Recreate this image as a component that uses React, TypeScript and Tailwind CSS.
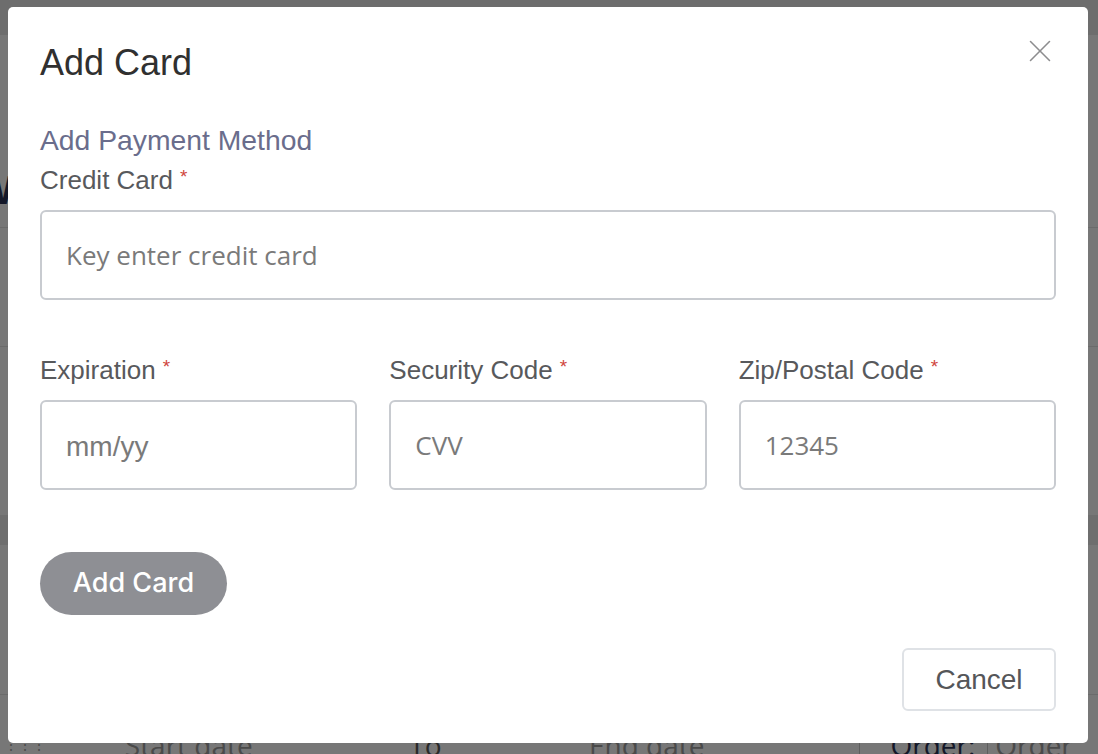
import { X } from "lucide-react";

function Label({ text }: { text: string }) {
    return (
        <div className="flex h-[26px] items-start text-[26px] leading-[26px] text-[#58595c]">
            <span>{text}</span>
            <span className="ml-[7px] text-[19px] leading-[19px] text-[#d0453c]">*</span>
        </div>
    );
}

function Field({ placeholder, mono }: { placeholder: string; mono?: boolean }) {
    return (
        <input
            placeholder={placeholder}
            className={`h-[90px] w-full rounded-[6px] border-2 border-[#c8cbd0] bg-white pl-[24px] text-[#444] outline-none placeholder:text-[#7a7a7a] ${mono ? "pt-[4px] font-['Liberation_Sans',Arial,sans-serif] text-[28px]" : "font-['Open_Sans',sans-serif] text-[26px]"}`}
        />
    );
}

export default function App() {
    return (
        <div className="relative h-[754px] w-full overflow-hidden bg-[#777777] font-['Liberation_Sans',Arial,sans-serif]">
            {/* page behind the overlay */}
            <div className="flex h-full flex-col">
                <div className="h-[35px] shrink-0 bg-[#6d6d6d]" />
                <div className="h-[140px] shrink-0" />
                <div className="h-[53px] shrink-0 border-b border-[#6b6b6b]">
                    <span className="-ml-[24px] block text-[40px] font-bold leading-[30px] text-[#141829]">W</span>
                </div>
                <div className="h-[119px] shrink-0 border-b border-[#6b6b6b]" />
                <div className="h-[168px] shrink-0" />
                <div className="h-[30px] shrink-0 bg-[#6e6e6e]" />
                <div className="h-[150px] shrink-0 border-b border-[#6b6b6b]" />
                <div className="h-[36px] shrink-0" />
                <div className="flex h-[40px] shrink-0 items-start font-['Open_Sans',sans-serif] text-[28px] leading-[28px]">
                    <span className="w-[125px] pl-1 text-[14px] text-[#4a4a4a]">⋮⋮⋮</span>
                    <span className="w-[285px] text-[#4a4a4a]">Start date</span>
                    <span className="w-[180px] text-[#2a2a2a]">To</span>
                    <span className="w-[271px] text-[#4a4a4a]">End date</span>
                    <span className="h-[40px] w-[128px] border-l border-[#5e5e5e] pl-[30px] text-[#141829]">Order:</span>
                    <span className="h-[40px] border-l border-[#5e5e5e] pl-[7px] text-[#4a4a4a]">Order #</span>
                </div>
            </div>

            {/* modal */}
            <div className="absolute left-2 top-[7px] flex h-[736px] w-[1080px] flex-col rounded-[5px] bg-white px-8 pt-[38px] pb-8">
                <button className="absolute right-[29px] top-[25px] text-[#8d8d8f]">
                    <X size={38} strokeWidth={1} />
                </button>

                <h1 className="text-[36px] leading-[36px] text-[#303030]">Add Card</h1>

                <p className="mt-[45px] text-[28.3px] leading-[28px] text-[#6a6d8c]">Add Payment Method</p>

                <div className="mt-[13px]">
                    <Label text="Credit Card" />
                </div>
                <div className="mt-[17px]">
                    <Field placeholder="Key enter credit card" />
                </div>

                <div className="mt-[57px] grid grid-cols-3 gap-8">
                    <div className="flex flex-col gap-[17px]">
                        <Label text="Expiration" />
                        <Field placeholder="mm/yy" mono />
                    </div>
                    <div className="flex flex-col gap-[17px]">
                        <Label text="Security Code" />
                        <Field placeholder="CVV" />
                    </div>
                    <div className="flex flex-col gap-[17px]">
                        <Label text="Zip/Postal Code" />
                        <Field placeholder="12345" />
                    </div>
                </div>

                <div className="mt-[62px]">
                    <button className="h-[63px] w-[187px] rounded-full bg-[#8e8f94] font-['Inter',sans-serif] text-[27px] font-medium text-white">
                        Add Card
                    </button>
                </div>

                <div className="mt-auto flex justify-end">
                    <button className="h-[63px] w-[154px] rounded-[6px] border-2 border-[#dfe2e6] bg-white text-[28px] text-[#555659]">
                        Cancel
                    </button>
                </div>
            </div>
        </div>
    );
}
